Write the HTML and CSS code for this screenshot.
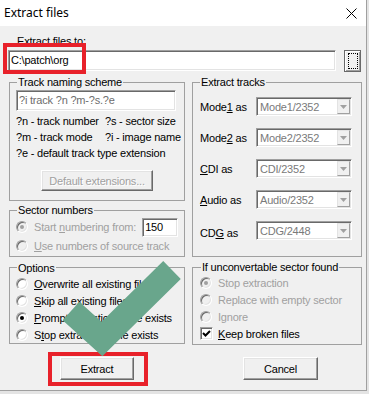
FILE: index.html
```html
<!DOCTYPE html>
<html lang="en">
<head>
  <meta charset="UTF-8">
  <meta name="viewport" content="width=device-width, initial-scale=1.0">
  <link rel="stylesheet" href="styles.css">
  <title>Extract files</title>
</head>
<body>
  <div class="window">
    <div class="titlebar">
      <span class="title">Extract files</span>
      <svg class="close" width="11" height="11" viewBox="0 0 11 11">
        <path d="M0.5 0.5L10.5 10.5M10.5 0.5L0.5 10.5" stroke="#000" stroke-width="1"/>
      </svg>
    </div>

    <div class="dialog">
      <div class="dest-label">Extract files to:</div>
      <div class="dest-row">
        <div class="textbox dest-input">C:\patch\org</div>
        <button class="btn browse"><span class="focus"></span></button>
        <span class="mark-box dest-mark"></span>
      </div>

      <div class="columns">
        <div class="col">
          <div class="group naming">
            <span class="group-title">Track naming scheme</span>
            <div class="textbox scheme">?i track ?n ?m-?s.?e</div>
            <div class="legend-grid">
              <span>?n - track number</span><span>?s - sector size</span>
              <span>?m - track mode</span><span>?i - image name</span>
              <span class="wide">?e - default track type extension</span>
            </div>
            <button class="btn disabled defaults">Default extensions...</button>
          </div>

          <div class="group sector">
            <span class="group-title">Sector numbers</span>
            <div class="opt first disabled">
              <span class="radio on"></span><span>Start <u>n</u>umbering from:</span>
              <div class="textbox num">150</div>
            </div>
            <div class="opt disabled">
              <span class="radio"></span><span><u>U</u>se numbers of source track</span>
            </div>
          </div>

          <div class="group options">
            <span class="group-title">Options</span>
            <div class="opt"><span class="radio"></span><span><u>O</u>verwrite all existing files</span></div>
            <div class="opt"><span class="radio"></span><span><u>S</u>kip all existing files</span></div>
            <div class="opt"><span class="radio on"></span><span><u>P</u>rompt (question) if file exists</span></div>
            <div class="opt"><span class="radio"></span><span>S<u>t</u>op extraction if file exists</span></div>
          </div>
        </div>

        <div class="col">
          <div class="group tracks">
            <span class="group-title">Extract tracks</span>
            <div class="track-row">
              <span class="track-label">Mode<u>1</u> as</span>
              <div class="combo"><span class="combo-text">Mode1/2352</span><span class="combo-btn"><svg width="7" height="4" viewBox="0 0 7 4"><path d="M0 0H7L3.5 4Z" fill="#a0a0a0"/></svg></span></div>
            </div>
            <div class="track-row">
              <span class="track-label">Mode<u>2</u> as</span>
              <div class="combo"><span class="combo-text">Mode2/2352</span><span class="combo-btn"><svg width="7" height="4" viewBox="0 0 7 4"><path d="M0 0H7L3.5 4Z" fill="#a0a0a0"/></svg></span></div>
            </div>
            <div class="track-row">
              <span class="track-label"><u>C</u>DI as</span>
              <div class="combo"><span class="combo-text">CDI/2352</span><span class="combo-btn"><svg width="7" height="4" viewBox="0 0 7 4"><path d="M0 0H7L3.5 4Z" fill="#a0a0a0"/></svg></span></div>
            </div>
            <div class="track-row">
              <span class="track-label"><u>A</u>udio as</span>
              <div class="combo"><span class="combo-text">Audio/2352</span><span class="combo-btn"><svg width="7" height="4" viewBox="0 0 7 4"><path d="M0 0H7L3.5 4Z" fill="#a0a0a0"/></svg></span></div>
            </div>
            <div class="track-row cdg">
              <span class="track-label">CD<u>G</u> as</span>
              <div class="combo"><span class="combo-text">CDG/2448</span><span class="combo-btn"><svg width="7" height="4" viewBox="0 0 7 4"><path d="M0 0H7L3.5 4Z" fill="#a0a0a0"/></svg></span></div>
            </div>
          </div>

          <div class="group broken">
            <span class="group-title">If unconvertable sector found</span>
            <div class="opt disabled"><span class="radio on"></span><span>Stop extraction</span></div>
            <div class="opt disabled"><span class="radio"></span><span>Replace with empty sector</span></div>
            <div class="opt disabled"><span class="radio"></span><span>Ignore</span></div>
            <div class="opt check-row">
              <span class="checkbox"><svg width="9" height="9" viewBox="0 0 9 9"><path d="M1 4L3.5 6.5L8 2" stroke="#000" stroke-width="2" fill="none"/></svg></span>
              <span><u>K</u>eep broken files</span>
            </div>
          </div>
        </div>
      </div>

      <div class="actions">
        <span class="mark-box extract-mark"><button class="btn action">Extract</button></span>
        <button class="btn action cancel">Cancel</button>
      </div>
    </div>

    <svg class="tick" width="130" height="107" viewBox="55 255 130 107">
      <path d="M71 311L102 339L172 270" stroke="#69a68c" stroke-width="25" fill="none" stroke-linejoin="miter"/>
    </svg>
  </div>
</body>
</html>
```

FILE: styles.css
```css
* {
  box-sizing: border-box;
}

html {
  background: #e4e4e4;
}

body {
  margin: 0;
  font-family: "Liberation Sans", Arial, sans-serif;
  font-size: 11px;
  letter-spacing: -0.2px;
  color: #000;
}

.window {
  position: relative;
  width: 367px;
  height: 391px;
  background: #f0f0f0;
  border-right: 1px solid #a0a0a0;
  border-bottom: 1px solid #a0a0a0;
}

.titlebar {
  height: 26px;
  background: #fff;
  display: flex;
  align-items: center;
  justify-content: space-between;
  padding: 0 9px 0 4px;
}

.title {
  font-family: "Noto Sans", sans-serif;
  font-size: 12px;
  letter-spacing: 0;
  line-height: 16px;
}

.dialog {
  padding-left: 8px;
}

.dest-label {
  margin: 9px 0 0 9px;
  line-height: 13px;
}

.dest-row {
  position: relative;
  display: flex;
  margin-top: 2px;
  height: 22px;
}

/* sunken edit box */
.textbox {
  background: #fff;
  border: 1px solid;
  border-color: #a0a0a0 #fff #fff #a0a0a0;
  box-shadow: inset 1px 1px #696969, inset -1px -1px #e3e3e3;
  padding: 0 2px;
  white-space: nowrap;
}

.dest-input {
  width: 328px;
  height: 21px;
  line-height: 19px;
}

/* raised button */
.btn {
  font: inherit;
  letter-spacing: inherit;
  color: #000;
  background: #f0f0f0;
  border: 1px solid;
  border-color: #fff #696969 #696969 #fff;
  box-shadow: inset -1px -1px #a0a0a0, inset 1px 1px #e3e3e3;
  padding: 0;
}

.btn.disabled {
  color: #a0a0a0;
  text-shadow: 1px 1px #fff;
}

.browse {
  width: 17px;
  height: 22px;
  margin-left: 8px;
  display: flex;
  align-items: center;
  justify-content: center;
  border-color: #696969;
  box-shadow: inset 1px 1px #fff, inset -1px -1px #a0a0a0;
}

.focus {
  width: 10px;
  height: 16px;
  border: 1px dotted #000;
}

.mark-box {
  border: 4px solid #e8212a;
}

.dest-mark {
  position: absolute;
  left: -5px;
  top: -7px;
  width: 83px;
  height: 31px;
}

.columns {
  display: flex;
  gap: 7px;
  margin: 10px 0 0 1px;
}

.col {
  display: flex;
  flex-direction: column;
}

.col:first-child {
  width: 176px;
}

.col:last-child {
  width: 170px;
}

.group {
  border: 1px solid #a0a0a0;
  padding-right: 6px;
}

.group-title {
  display: table;
  margin: -7px 0 0 7px;
  padding: 0 1px;
  line-height: 13px;
  background: #f0f0f0;
}

.naming {
  padding-bottom: 9px;
}

.scheme {
  margin: 1px 0 0 6px;
  width: 160px;
  height: 21px;
  line-height: 19px;
  color: #6d6d6d;
}

.legend-grid {
  display: grid;
  grid-template-columns: 89px auto;
  margin: 2px 0 0 6px;
  line-height: 16px;
  white-space: nowrap;
}

.wide {
  grid-column: 1 / 3;
}

.defaults {
  display: block;
  width: 112px;
  height: 21px;
  margin: 9px auto 0 31px;
}

.sector {
  margin-top: 9px;
  padding-bottom: 2px;
}

.options {
  margin-top: 10px;
  padding-top: 1px;
}

.opt {
  display: flex;
  align-items: center;
  height: 17px;
  padding-left: 6px;
  gap: 6px;
  white-space: nowrap;
}

.opt.first {
  height: 20px;
}

.disabled {
  color: #a0a0a0;
}

.num {
  margin-left: auto;
  width: 41px;
  height: 19px;
  line-height: 17px;
  color: #000;
}

.radio {
  position: relative;
  flex: none;
  width: 12px;
  height: 12px;
  border-radius: 50%;
  background: #fff;
  border: 1px solid;
  border-color: #a0a0a0 #fff #fff #a0a0a0;
  box-shadow: inset 1px 1px #696969, inset -1px -1px #e3e3e3;
}

.radio.on::after {
  content: "";
  position: absolute;
  left: 3px;
  top: 3px;
  width: 4px;
  height: 4px;
  border-radius: 50%;
  background: #000;
}

.disabled .radio {
  background: #f0f0f0;
}

.disabled .radio.on::after {
  background: #a0a0a0;
}

.tracks {
  flex: none;
  padding-bottom: 16px;
  padding-right: 9px;
}

.track-row {
  display: flex;
  align-items: center;
  height: 19px;
  margin-top: 12px;
}

.tracks .group-title + .track-row {
  margin-top: 8px;
}

.track-label {
  width: 63px;
  padding-left: 7px;
  white-space: nowrap;
}

.cdg .track-label {
  padding-top: 5px;
}

.combo {
  display: flex;
  align-items: center;
  width: 96px;
  height: 19px;
  background: #fff;
  border: 1px solid;
  border-color: #a0a0a0 #fff #fff #a0a0a0;
  box-shadow: inset 1px 1px #696969, inset -1px -1px #e3e3e3;
  padding: 1px;
  color: #7a7a7a;
}

.combo-text {
  padding-left: 2px;
}

.combo-btn {
  margin-left: auto;
  width: 13px;
  height: 15px;
  display: flex;
  align-items: center;
  justify-content: center;
  background: #f0f0f0;
  border: 1px solid;
  border-color: #e3e3e3 #a0a0a0 #a0a0a0 #e3e3e3;
}

.broken {
  margin-top: 10px;
  padding-bottom: 2px;
  padding-left: 1px;
}

.broken .opt {
  padding-left: 6px;
}

.check-row {
  gap: 5px;
}

.checkbox {
  flex: none;
  width: 13px;
  height: 13px;
  display: flex;
  align-items: center;
  justify-content: center;
  background: #fff;
  border: 1px solid;
  border-color: #a0a0a0 #fff #fff #a0a0a0;
  box-shadow: inset 1px 1px #696969, inset -1px -1px #e3e3e3;
}

.actions {
  display: flex;
  align-items: flex-start;
  margin-top: 7px;
}

.extract-mark {
  display: block;
  margin-left: 40px;
  padding: 1px 10px 2px 8px;
}

.action {
  display: block;
  width: 74px;
  height: 23px;
}

.cancel {
  width: 75px;
  margin: 5px 0 0 95px;
}

.tick {
  position: absolute;
  left: 55px;
  top: 255px;
  pointer-events: none;
}
```
